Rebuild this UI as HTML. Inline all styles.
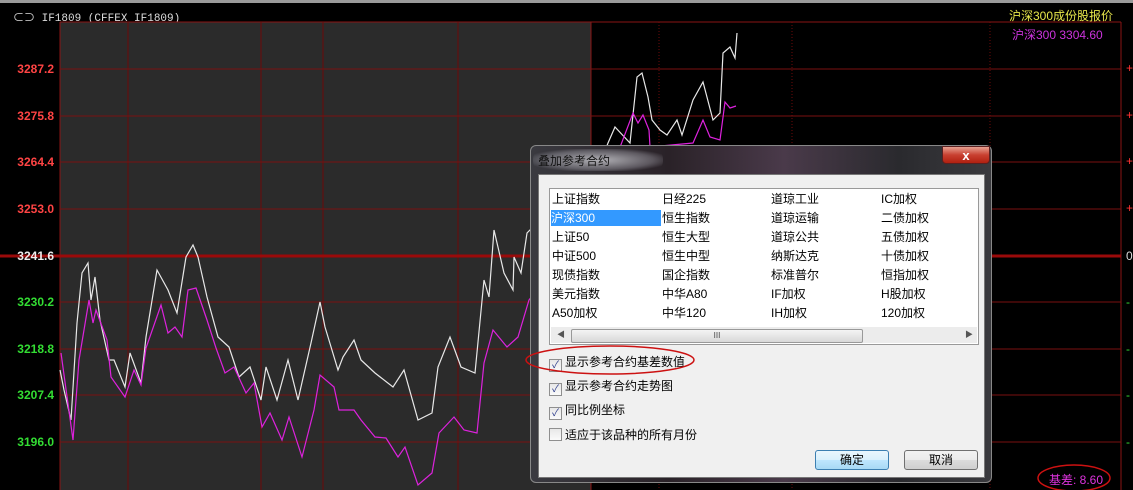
<!DOCTYPE html>
<html><head><meta charset="utf-8"><style>
body{margin:0;width:1133px;height:490px;overflow:hidden;background:#000;font-family:"Liberation Sans","Noto Sans CJK SC",sans-serif;position:relative}
.a{position:absolute;white-space:nowrap}
.lab{position:absolute;right:1079px;font-size:12px;font-weight:bold;line-height:14px}
.dlg{position:absolute;left:530px;top:145px;width:462px;height:338px;border-radius:6px;background:linear-gradient(90deg,#3a3a40,#2a2228 30%,#4a3a4a 55%,#2a2a2e 80%,#3a3a3e);border:1px solid #888;box-sizing:border-box}
.inner{position:absolute;left:7px;top:28px;width:447px;height:304px;background:#f0f0f0;border:1px solid #777;box-sizing:border-box}
.list{position:absolute;left:10px;top:13px;width:430px;height:157px;background:#fff;border:1px solid #999;box-sizing:border-box;font-size:12px;color:#000}
.list span{position:absolute;line-height:16px}
.cb{position:absolute;left:10px;font-size:12px;color:#000;line-height:16px}
.cb i{display:inline-block;width:11px;height:11px;border:1px solid #8f8f8f;background:linear-gradient(#e8e8e8,#fafafa);vertical-align:-2px;margin-right:3px;font-style:normal;font-size:10px;line-height:11px;text-align:center;color:#2a3a8a}
.btn{position:absolute;top:275px;width:72px;height:18px;border:1px solid #707070;border-radius:3px;background:linear-gradient(#f2f2f2,#ebebeb 50%,#dcdcdc 51%,#cfcfcf);font-size:12px;text-align:center;line-height:18px;color:#000}
</style></head><body>
<div class="a" style="left:0;top:0;width:1133px;height:3px;background:#9a9a9a"></div>
<div class="a" style="left:13px;top:9px;color:#ddd;font-size:11px;font-family:'Liberation Mono','Noto Sans CJK SC',monospace">⊂⊃ IF1809  (CFFEX IF1809)</div>
<div class="a" style="left:1009px;top:7px;color:#e6e64a;font-size:12px">沪深300成份股报价</div>
<div class="a" style="left:1012px;top:26px;color:#cc33dd;font-size:12px">沪深300  3304.60</div>
<svg class="a" style="left:0;top:0" width="1133" height="490">
<rect x="60" y="22" width="531" height="468" fill="#2b2b2b"/>
<g stroke="#6e0a0a" stroke-width="1">
<line x1="60" y1="22" x2="1121" y2="22" stroke="#8a1515"/>
<line x1="60" y1="22" x2="60" y2="490" stroke="#8a1515"/>
<line x1="1121" y1="22" x2="1121" y2="490" stroke="#8a1515"/>
<line x1="128" y1="22" x2="128" y2="490"/><line x1="261" y1="22" x2="261" y2="490"/><line x1="323" y1="22" x2="323" y2="490"/><line x1="458" y1="22" x2="458" y2="490"/>
<line x1="591" y1="22" x2="591" y2="490" stroke="#8a1515"/>
<g stroke-dasharray="1,2"><line x1="659" y1="22" x2="659" y2="490"/><line x1="792" y1="22" x2="792" y2="490"/><line x1="990" y1="22" x2="990" y2="490"/></g>
<g stroke="#7a1010"><line x1="60" y1="69" x2="1121" y2="69"/><line x1="60" y1="116" x2="1121" y2="116"/><line x1="60" y1="162" x2="1121" y2="162"/><line x1="60" y1="209" x2="1121" y2="209"/><line x1="60" y1="302" x2="1121" y2="302"/><line x1="60" y1="349" x2="1121" y2="349"/><line x1="60" y1="395" x2="1121" y2="395"/><line x1="60" y1="442" x2="1121" y2="442"/></g>
<line x1="0" y1="256" x2="1121" y2="256" stroke="#9a0a0a" stroke-width="3"/>
</g>
<polyline fill="none" stroke="#e8e8e8" stroke-width="1.2" points="60,370 64,390 71,420 77,323 82,273 88,263 91,300 95,277 100,320 109,360 114,360 125,387 130,353 141,383 146,337 157,270 168,290 177,313 186,257 193,245 198,257 207,297 218,337 229,347 239,377 250,367 261,400 266,367 277,400 288,360 298,400 311,343 320,302 325,327 338,370 343,357 354,340 361,360 375,373 393,387 404,370 418,420 432,413 438,367 450,337 461,367 475,373 484,280 489,297 494,230 504,273 513,290 514,257 521,273 527,233 535,225 560,210 590,190 608,143 615,127 630,143 637,77 642,73 648,97 652,120 660,130 667,135 677,120 682,135 693,100 703,82 713,120 720,113 723,53 730,47 735,58 737,33"/>
<polyline fill="none" stroke="#dd22dd" stroke-width="1.2" points="61,353 73,440 79,360 89,300 93,323 96,310 107,340 111,377 125,397 134,370 141,385 146,348 161,305 168,333 175,327 182,337 188,290 196,288 207,320 216,348 225,373 234,367 246,393 254,383 262,427 270,413 282,440 289,417 302,457 314,410 320,375 334,387 339,410 354,410 361,420 375,437 386,438 398,457 405,447 418,485 432,473 439,433 454,417 464,430 477,433 484,363 493,330 507,347 518,337 529,300 560,260 600,200 633,113 638,123 643,115 649,130 650,147 693,143 703,120 710,137 720,140 725,102 730,108 736,106"/>
<ellipse cx="1074" cy="478" rx="36" ry="13" fill="none" stroke="#cc1111" stroke-width="1.5"/>
</svg>
<div class="lab" style="top:62px;color:#ff4444">3287.2</div>
<div class="lab" style="top:109px;color:#ff4444">3275.8</div>
<div class="lab" style="top:155px;color:#ff4444">3264.4</div>
<div class="lab" style="top:202px;color:#ff4444">3253.0</div>
<div class="lab" style="top:249px;color:#eee">3241.6</div>
<div class="lab" style="top:295px;color:#33dd33">3230.2</div>
<div class="lab" style="top:342px;color:#33dd33">3218.8</div>
<div class="lab" style="top:388px;color:#33dd33">3207.4</div>
<div class="lab" style="top:435px;color:#33dd33">3196.0</div>
<div class="a" style="left:1126px;top:61px;color:#f33;font-size:12px">+</div>
<div class="a" style="left:1126px;top:108px;color:#f33;font-size:12px">+</div>
<div class="a" style="left:1126px;top:154px;color:#f33;font-size:12px">+</div>
<div class="a" style="left:1126px;top:201px;color:#f33;font-size:12px">+</div>
<div class="a" style="left:1126px;top:249px;color:#ddd;font-size:12px">0</div>
<div class="a" style="left:1126px;top:295px;color:#3d3;font-size:12px">-</div>
<div class="a" style="left:1126px;top:342px;color:#3d3;font-size:12px">-</div>
<div class="a" style="left:1126px;top:388px;color:#3d3;font-size:12px">-</div>
<div class="a" style="left:1126px;top:435px;color:#3d3;font-size:12px">-</div>
<div class="a" style="left:1049px;top:471px;color:#dd33dd;font-size:12px">基差: 8.60</div>
<div class="dlg">
<div class="a" style="left:2px;top:3px;width:130px;height:22px;border-radius:10px;background:radial-gradient(ellipse at center,rgba(220,220,225,0.75),rgba(200,200,210,0.3) 60%,rgba(0,0,0,0) 80%)"></div>
<div class="a" style="left:7px;top:6px;color:#111;font-size:12px">叠加参考合约</div>
<div class="a" style="left:411px;top:0;width:48px;height:18px;border-radius:0 0 4px 4px;background:linear-gradient(#e8a090,#c84030 50%,#b02010);border:1px solid #5a2020;color:#fff;font-size:13px;font-weight:bold;text-align:center;line-height:18px;box-sizing:border-box">x</div>
<div class="inner">
<div class="list">
<span style="left:2px;top:2px">上证指数</span><span style="left:112px;top:2px">日经225</span><span style="left:221px;top:2px">道琼工业</span><span style="left:331px;top:2px">IC加权</span>
<span style="left:1px;top:21px;width:110px;background:#3399ff;color:#fff">沪深300</span><span style="left:112px;top:21px">恒生指数</span><span style="left:221px;top:21px">道琼运输</span><span style="left:331px;top:21px">二债加权</span>
<span style="left:2px;top:40px">上证50</span><span style="left:112px;top:40px">恒生大型</span><span style="left:221px;top:40px">道琼公共</span><span style="left:331px;top:40px">五债加权</span>
<span style="left:2px;top:59px">中证500</span><span style="left:112px;top:59px">恒生中型</span><span style="left:221px;top:59px">纳斯达克</span><span style="left:331px;top:59px">十债加权</span>
<span style="left:2px;top:78px">现债指数</span><span style="left:112px;top:78px">国企指数</span><span style="left:221px;top:78px">标准普尔</span><span style="left:331px;top:78px">恒指加权</span>
<span style="left:2px;top:97px">美元指数</span><span style="left:112px;top:97px">中华A80</span><span style="left:221px;top:97px">IF加权</span><span style="left:331px;top:97px">H股加权</span>
<span style="left:2px;top:116px">A50加权</span><span style="left:112px;top:116px">中华120</span><span style="left:221px;top:116px">IH加权</span><span style="left:331px;top:116px">120加权</span>
<div style="position:absolute;left:1px;top:138px;width:426px;height:16px;background:#ececec"></div>
<div style="position:absolute;left:21px;top:140px;width:290px;height:12px;border:1px solid #999;border-radius:2px;background:linear-gradient(#f4f4f4,#d8d8d8);font-size:8px;text-align:center;line-height:12px;color:#444">III</div>
<div style="position:absolute;left:7px;top:140px;font-size:8px;color:#555">◀</div>
<div style="position:absolute;left:415px;top:140px;font-size:8px;color:#555">▶</div>
</div>
<div class="cb" style="top:179px"><i>✓</i>显示参考合约基差数值</div>
<div class="cb" style="top:203px"><i>✓</i>显示参考合约走势图</div>
<div class="cb" style="top:227px"><i>✓</i>同比例坐标</div>
<div class="cb" style="top:252px"><i></i>适应于该品种的所有月份</div>
<div class="btn" style="left:276px;border-color:#3c7fb1;background:linear-gradient(#eaf6fd,#d9f0fc 50%,#bee6fd 51%,#a7d9f5)">确定</div>
<div class="btn" style="left:365px">取消</div>
</div>
</div>
<svg class="a" style="left:0;top:0;pointer-events:none" width="1133" height="490">
<ellipse cx="610" cy="360" rx="84" ry="14" fill="none" stroke="#cc1111" stroke-width="1.5"/>
</svg>
</body></html>
